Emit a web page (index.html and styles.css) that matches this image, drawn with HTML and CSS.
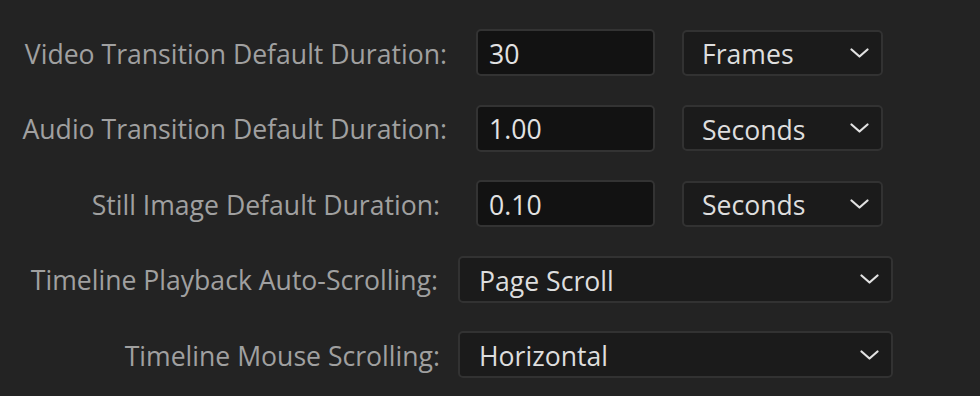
FILE: index.html
```html
<!DOCTYPE html>
<html>
<head>
<meta charset="utf-8">
<link rel="stylesheet" href="styles.css">
</head>
<body>
<div class="prefs">
  <div class="row">
    <div class="label">Video Transition Default Duration:</div>
    <div class="field">30</div>
    <div class="select"><span>Frames</span><svg class="chev" viewBox="0 0 19 10"><path d="M1.5 1.5 L9.5 8.5 L17.5 1.5"/></svg></div>
  </div>
  <div class="row">
    <div class="label">Audio Transition Default Duration:</div>
    <div class="field">1.00</div>
    <div class="select"><span>Seconds</span><svg class="chev" viewBox="0 0 19 10"><path d="M1.5 1.5 L9.5 8.5 L17.5 1.5"/></svg></div>
  </div>
  <div class="row">
    <div class="label still">Still Image Default Duration:</div>
    <div class="field">0.10</div>
    <div class="select"><span>Seconds</span><svg class="chev" viewBox="0 0 19 10"><path d="M1.5 1.5 L9.5 8.5 L17.5 1.5"/></svg></div>
  </div>
  <div class="row wide">
    <div class="label playback">Timeline Playback Auto-Scrolling:</div>
    <div class="select long"><span>Page Scroll</span><svg class="chev" viewBox="0 0 19 10"><path d="M1.5 1.5 L9.5 8.5 L17.5 1.5"/></svg></div>
  </div>
  <div class="row wide">
    <div class="label">Timeline Mouse Scrolling:</div>
    <div class="select long"><span>Horizontal</span><svg class="chev" viewBox="0 0 19 10"><path d="M1.5 1.5 L9.5 8.5 L17.5 1.5"/></svg></div>
  </div>
</div>
</body>
</html>
```
FILE: styles.css
```css
html, body {
  margin: 0;
  padding: 0;
  background: #232323;
  height: 100%;
  overflow: hidden;
}
body {
  font-family: "Open Sans", "Noto Sans", sans-serif;
}
.prefs {
  display: flex;
  flex-direction: column;
  gap: 28.5px;
  padding-top: 29px;
}
.row {
  display: flex;
  align-items: center;
  height: 47px;
}
.label {
  width: 447px;
  flex: none;
  box-sizing: border-box;
  text-align: right;
  color: #a0a0a0;
  font-size: 26.6px;
  white-space: nowrap;
  padding-top: 2px;
}
.label.still {
  padding-right: 7px;
}
.field {
  margin-left: 29px;
  width: 179px;
  height: 47px;
  box-sizing: border-box;
  border: 2px solid #333333;
  border-radius: 5px;
  background: #121212;
  color: #e2e2e2;
  font-size: 26.6px;
  display: flex;
  align-items: center;
  padding-left: 11px;
  padding-top: 2px;
}
.select {
  margin-left: 27px;
  width: 201px;
  height: 46px;
  box-sizing: border-box;
  border: 2px solid #323232;
  border-radius: 5px;
  background: #1b1b1b;
  color: #dedede;
  font-size: 26.6px;
  display: flex;
  align-items: center;
  justify-content: space-between;
  padding-left: 18px;
  padding-right: 12px;
}
.select span {
  padding-top: 3px;
}
.wide .label {
  width: 440px;
}
.wide .label.playback {
  padding-right: 2px;
}
.select.long {
  margin-left: 18px;
  width: 435px;
  height: 47px;
  padding-left: 19px;
  padding-right: 12px;
}
.chev {
  width: 19px;
  height: 10px;
  fill: none;
  stroke: #e2e2e2;
  stroke-width: 2.2;
  stroke-linecap: round;
  stroke-linejoin: round;
}
```
